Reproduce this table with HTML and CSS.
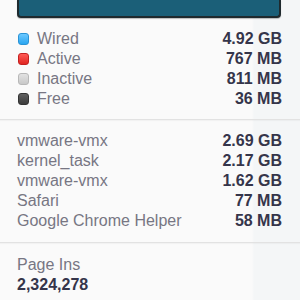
FILE: index.html
```html
<!DOCTYPE html>
<html>
<head>
<meta charset="utf-8">
<link rel="stylesheet" href="styles.css">
</head>
<body>
<div class="panel">
  <div class="bar-wrap"><div class="bar"></div></div>
  <div class="section legend">
    <div class="row"><span class="label"><i class="sw wired"></i>Wired</span><span class="val">4.92 GB</span></div>
    <div class="row"><span class="label"><i class="sw active"></i>Active</span><span class="val">767 MB</span></div>
    <div class="row"><span class="label"><i class="sw inactive"></i>Inactive</span><span class="val">811 MB</span></div>
    <div class="row"><span class="label"><i class="sw free"></i>Free</span><span class="val">36 MB</span></div>
  </div>
  <div class="section procs">
    <div class="row"><span class="label">vmware-vmx</span><span class="val">2.69 GB</span></div>
    <div class="row"><span class="label">kernel_task</span><span class="val">2.17 GB</span></div>
    <div class="row"><span class="label">vmware-vmx</span><span class="val">1.62 GB</span></div>
    <div class="row"><span class="label">Safari</span><span class="val">77 MB</span></div>
    <div class="row"><span class="label">Google Chrome Helper</span><span class="val">58 MB</span></div>
  </div>
  <div class="section pageins">
    <div class="label">Page Ins</div>
    <div class="val">2,324,278</div>
  </div>
</div>
</body>
</html>
```
FILE: styles.css
```css
html, body {
  margin: 0;
  padding: 0;
}
body {
  width: 300px;
  height: 300px;
  overflow: hidden;
  background: linear-gradient(to right, #fafafa 0, #fafafa 252px, #f4f6f7 254px, #f4f6f7 100%);
  font-family: "Liberation Sans", Arial, sans-serif;
  font-size: 16px;
  line-height: 20px;
}
.panel {
  display: flex;
  flex-direction: column;
}
.bar-wrap {
  padding: 0 19px 0 17px;
  height: 20px;
}
.bar {
  height: 18px;
  box-sizing: border-box;
  background: #1b5f78;
  border: 2px solid #1f2a2e;
  border-top: none;
  border-radius: 0 0 4px 4px;
  box-shadow: 0 1px 1px rgba(0,0,0,0.25);
}
.section {
  display: flex;
  flex-direction: column;
  padding: 0 18px 0 17px;
}
.legend {
  padding-top: 9px;
  padding-bottom: 10px;
  border-bottom: 1px solid #e2e2e2;
  box-shadow: 0 1px 1px rgba(0,0,0,0.03);
}
.procs {
  padding-top: 11px;
  padding-bottom: 11px;
  border-bottom: 1px solid #e2e2e2;
  box-shadow: 0 1px 1px rgba(0,0,0,0.03);
}
.pageins {
  padding-top: 12px;
}
.row {
  display: flex;
  justify-content: space-between;
  align-items: center;
  height: 20px;
}
.label {
  color: #777683;
  display: flex;
  align-items: center;
}
.val {
  color: #35354a;
  font-weight: bold;
}
.sw {
  display: inline-block;
  width: 11px;
  height: 12px;
  border-radius: 3px;
  margin: 0 8px 0 1px;
  box-sizing: border-box;
}
.wired {
  background: linear-gradient(#6cc8ff, #2aa6f0);
  border: 1px solid #2a94d6;
}
.active {
  background: linear-gradient(#ff5a55, #e02622);
  border: 1px solid #c42020;
}
.inactive {
  background: linear-gradient(#e2e2e2, #c8c8c8);
  border: 1px solid #b8b8b8;
}
.free {
  background: linear-gradient(#606060, #3c3c3c);
  border: 1px solid #333;
}
```
